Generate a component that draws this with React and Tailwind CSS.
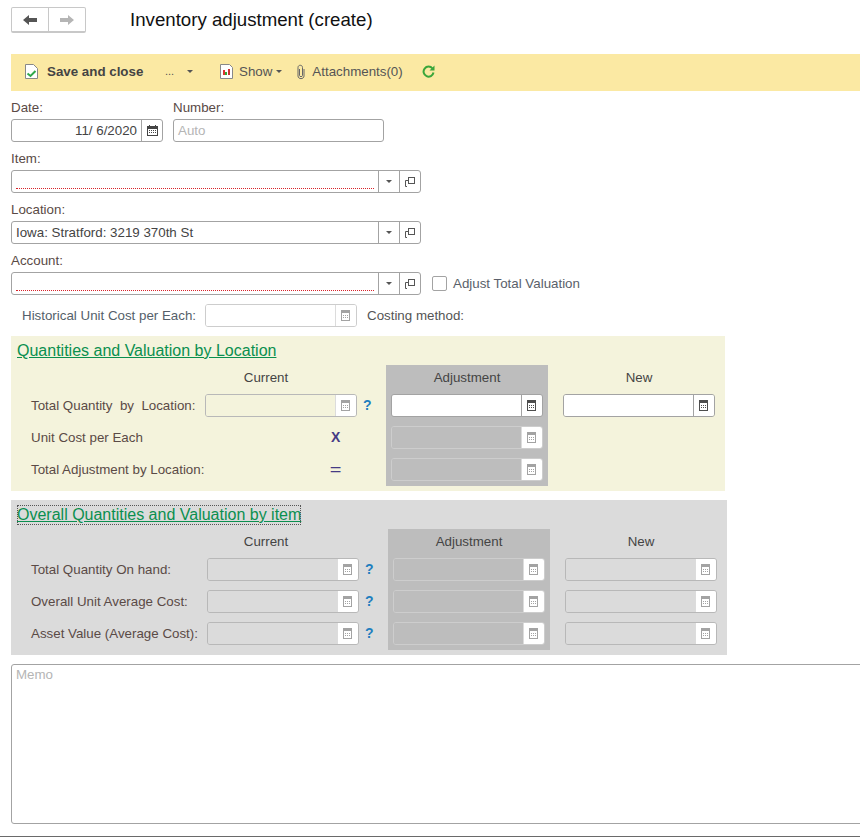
import React from 'react'

function CalcIcon({ muted }) {
  const c = muted ? '#a3a3a3' : '#4d4d4d'
  return (
    <svg width="9" height="11" viewBox="0 0 9 11" fill="none">
      <rect x="0.5" y="0.5" width="8" height="10" fill="#fff" stroke={c} />
      <rect x="1" y="1" width="7" height="2" fill={c} />
      <path d="M2 5h1v1H2zM4 5h1v1H4zM6 5h1v1H6zM2 7h1v1H2zM4 7h1v1H4zM6 7h1v1H6z" fill={c} />
    </svg>
  )
}

function DateIcon() {
  return (
    <svg width="11" height="11" viewBox="0 0 11 11" fill="none">
      <rect x="0.5" y="1.5" width="10" height="9" fill="#fff" stroke="#444" />
      <rect x="0" y="1" width="11" height="3" fill="#444" />
      <path d="M2 0h1v2H2zM8 0h1v2H8z" fill="#444" />
      <path d="M2 5h1v1H2zM4 5h1v1H4zM6 5h1v1H6zM8 5h1v1H8zM2 7h1v1H2zM4 7h1v1H4zM6 7h1v1H6zM8 7h1v1H8z" fill="#444" />
    </svg>
  )
}

function Caret() {
  return <span className="block w-0 h-0 border-x-[3px] border-x-transparent border-t-[3px] border-t-[#555]" />
}

function OpenIcon() {
  return (
    <svg width="10" height="10" viewBox="0 0 10 10" fill="none" stroke="#555">
      <path d="M3 3.500H0.500V9.500H2" />
      <rect x="3.500" y="0.500" width="6" height="6" />
    </svg>
  )
}

// calculator input; variant picks border and fill of the three states in the form
function NumField({ variant = 'active', fill = 'bg-white' }) {
  const border = variant === 'active' ? 'border-[#a3a3a3]' : variant === 'soft' ? 'border-[#cdcdcd]' : 'border-[#b8b8b8]'
  const divider = variant === 'active' ? 'border-[#a3a3a3]' : 'border-[#dcdcdc]'
  return (
    <div className={`w-[152px] h-[23px] flex border rounded-[3px] overflow-hidden shrink-0 ${border}`}>
      <div className={`flex-1 ${fill}`} />
      <div className={`w-[21px] flex items-center justify-center bg-white border-l pr-[1px] ${divider}`}>
        <CalcIcon muted={variant !== 'active'} />
      </div>
    </div>
  )
}

function PickField({ value, empty }) {
  return (
    <div className="w-[410px] h-[23px] flex border border-[#a3a3a3] rounded-[3px] bg-white overflow-hidden">
      <div className="flex-1 pl-1 pr-[4px] leading-[21px] text-[#444]">
        {value}
        {empty && <div className="h-[18px] border-b border-dotted border-[#d8232a]" />}
      </div>
      <div className="w-[21px] flex items-center justify-center border-l border-[#a3a3a3]"><Caret /></div>
      <div className="w-[21px] flex items-center justify-center border-l border-[#a3a3a3]"><OpenIcon /></div>
    </div>
  )
}

function Label({ children, className = '' }) {
  return <div className={`text-[#5a4a46] leading-[14px] ${className}`}>{children}</div>
}

function Help() {
  return <span className="font-bold text-[#1f7fbf] text-[14px]">?</span>
}

function Section({ bg, title, focused, left, rows, newCol, leftWidth, className = '' }) {
  return (
    <div className={`${bg} h-[155px] flex flex-col ${className}`}>
      <div className="h-[29px] pl-[6px] pt-[5px]">
        <span className={`inline-block h-[20px] leading-[19px] text-[16px] underline text-[#0a8f4f] ${focused ? 'outline outline-1 outline-dotted outline-[#555] -outline-offset-1' : ''}`}>
          {title}
        </span>
      </div>
      <div className="flex pl-5">
        <div className={leftWidth}>
          <div className="h-[29px] w-[355px] pl-[115px] text-center leading-[25px] text-[#444]">Current</div>
          <div className="flex flex-col gap-[9px]">
            {left.map((row) => (
              <div key={row.label} className="h-[23px] flex items-center">
                <div className="w-[174px] text-[#5a4a46] whitespace-pre">{row.label}</div>
                {row.field}
                {row.mark}
              </div>
            ))}
          </div>
        </div>
        <div className="w-[162px] h-[121px] bg-[#bdbdbd] px-[5px]">
          <div className="h-[29px] text-center leading-[25px] text-[#444]">Adjustment</div>
          <div className="flex flex-col gap-[9px]">{rows}</div>
        </div>
        <div className="w-[152px] ml-[15px]">
          <div className="h-[29px] text-center leading-[25px] text-[#444]">New</div>
          <div className="flex flex-col gap-[9px]">{newCol}</div>
        </div>
      </div>
    </div>
  )
}

export default function App() {
  return (
    <div className="w-[860px] h-[837px] overflow-hidden relative bg-white text-[13.33px] font-['Liberation_Sans',Arial,sans-serif]">
      <div className="flex pl-[11px] pt-[7px] h-[54px]">
        <div className="w-[75px] h-[26px] flex border border-[#c8c8c8] border-b-2 rounded-[2px]">
          <div className="flex-1 flex items-center justify-center border-r border-[#c8c8c8]">
            <svg width="14" height="10" viewBox="0 0 14 10" fill="#555"><path d="M0 5L6 0V3H14V7H6V10Z" /></svg>
          </div>
          <div className="flex-1 flex items-center justify-center">
            <svg width="14" height="10" viewBox="0 0 14 10" fill="#b5b5b5"><path d="M14 5L8 0V3H0V7H8V10Z" /></svg>
          </div>
        </div>
        <h1 className="ml-[44px] text-[18.67px] leading-[26px] text-[#111]">Inventory adjustment (create)</h1>
      </div>

      <div className="ml-[11px] h-[37px] bg-[#fbe9a3] flex items-center text-[#555] pl-[14px] pb-[2px]">
        <svg width="13" height="15" viewBox="0 0 13 15" fill="none">
          <path d="M0.500 0.500H8.500L12.500 4.500V14.500H0.500Z" fill="#fff" stroke="#888" />
          <path d="M2.500 9.500L5.500 12L10.500 7" stroke="#2fa84a" strokeWidth="2" />
        </svg>
        <span className="ml-[9px] font-bold text-[#444] w-[118px]">Save and close</span>
        <span className="text-[#555] text-[11px] w-[22px]">...</span>
        <Caret />
        <svg className="ml-[27px]" width="13" height="15" viewBox="0 0 13 15" fill="none">
          <path d="M0.500 0.500H9.500L12.500 3.500V14.500H0.500Z" fill="#fff" stroke="#888" />
          <path d="M3 6h2v5H3z" fill="#d33" /><path d="M5 8h2v3H5z" fill="#3a3" /><path d="M8 5h2v6H8z" fill="#c33" />
        </svg>
        <span className="ml-[6px]">Show</span>
        <span className="ml-[4px]"><Caret /></span>
        <svg className="ml-[15px]" width="8" height="16" viewBox="0 0 8 16" fill="none" stroke="#666">
          <path d="M2.500 5V11.500C2.500 13 5.500 13 5.500 11.500V3.500C5.500 0.500 1 0.500 1 3.500V12C1 15.500 7 15.500 7 12V5" />
        </svg>
        <span className="ml-[7px]">Attachments(0)</span>
        <svg className="ml-[19px]" width="13" height="13" viewBox="0 0 13 13" fill="none" stroke="#3aa63a" strokeWidth="2">
          <path d="M10.500 3.500A5 5 0 1 0 11.500 7.500" />
          <path d="M12.500 0.500V5.500H7.500Z" fill="#3aa63a" stroke="none" />
        </svg>
      </div>

      <div className="ml-[11px]">
        <div className="flex gap-[10px] pt-[10px]">
          <div>
            <Label className="h-[18px]">Date:</Label>
            <div className="w-[152px] h-[23px] flex border border-[#a3a3a3] rounded-[3px]">
              <div className="flex-1 text-right pr-1 leading-[21px] text-[#444]">11/ 6/2020</div>
              <div className="w-[21px] flex items-center justify-center border-l border-[#a3a3a3]"><DateIcon /></div>
            </div>
          </div>
          <div>
            <Label className="h-[18px]">Number:</Label>
            <div className="w-[211px] h-[23px] border border-[#a3a3a3] rounded-[3px] pl-1 leading-[21px] text-[#b5b5b5]">Auto</div>
          </div>
        </div>

        <Label className="mt-[10px] h-[18px]">Item:</Label>
        <PickField empty />
        <Label className="mt-[10px] h-[18px]">Location:</Label>
        <PickField value="Iowa: Stratford: 3219 370th St" />
        <Label className="mt-[10px] h-[18px]">Account:</Label>
        <div className="flex items-center">
          <PickField empty />
          <span className="ml-[11px] w-[15px] h-[15px] border border-[#a3a3a3] rounded-[2px]" />
          <span className="ml-[6px] text-[#5a5f6a]">Adjust Total Valuation</span>
        </div>

        <div className="flex items-center mt-[9px] h-[23px] pl-[11px]">
          <span className="w-[183px] text-[#555f6a]">Historical Unit Cost per Each:</span>
          <NumField variant="soft" />
          <span className="ml-[10px] text-[#555]">Costing method:</span>
        </div>

        <Section
          className="w-[714px] mt-[9px]"
          bg="bg-[#f4f3dc]"
          title="Quantities and Valuation by Location"
          leftWidth="w-[355px]"
          left={[
            {
              label: 'Total Quantity  by  Location:',
              field: <NumField variant="muted" fill="bg-[#f4f3dc]" />,
              mark: <span className="ml-[6px]"><Help /></span>,
            },
            {
              label: 'Unit Cost per Each',
              field: <span className="ml-[126px] font-bold text-[#453a85] text-[14px]">X</span>,
            },
            {
              label: 'Total Adjustment by Location:',
              field: <span className="ml-[126px] text-[#453a85] text-[16px] scale-x-125">=</span>,
            },
          ]}
          rows={[
            <NumField key="a" />,
            <NumField key="b" variant="soft" fill="bg-[#bdbdbd]" />,
            <NumField key="c" variant="soft" fill="bg-[#bdbdbd]" />,
          ]}
          newCol={<NumField />}
        />

        <Section
          className="w-[716px] mt-[9px]"
          bg="bg-[#dbdbdb]"
          focused
          title="Overall Quantities and Valuation by item"
          leftWidth="w-[357px]"
          left={['Total Quantity On hand:', 'Overall Unit Average Cost:', 'Asset Value (Average Cost):'].map((label) => ({
            label,
            field: <span className="ml-[2px]"><NumField variant="muted" fill="bg-[#dbdbdb]" /></span>,
            mark: <span className="ml-[6px]"><Help /></span>,
          }))}
          rows={[0, 1, 2].map((n) => <NumField key={n} variant="soft" fill="bg-[#bdbdbd]" />)}
          newCol={[0, 1, 2].map((n) => <NumField key={n} variant="muted" fill="bg-[#dbdbdb]" />)}
        />

        <div className="mt-[9px] w-[860px] h-[160px] border border-[#a3a3a3] rounded-[3px] pl-1 pt-[2px] leading-[16px] text-[#b5b5b5]">Memo</div>
      </div>

      <div className="absolute bottom-0 left-0 w-full h-px bg-[#6a6a6a]" />
    </div>
  )
}
